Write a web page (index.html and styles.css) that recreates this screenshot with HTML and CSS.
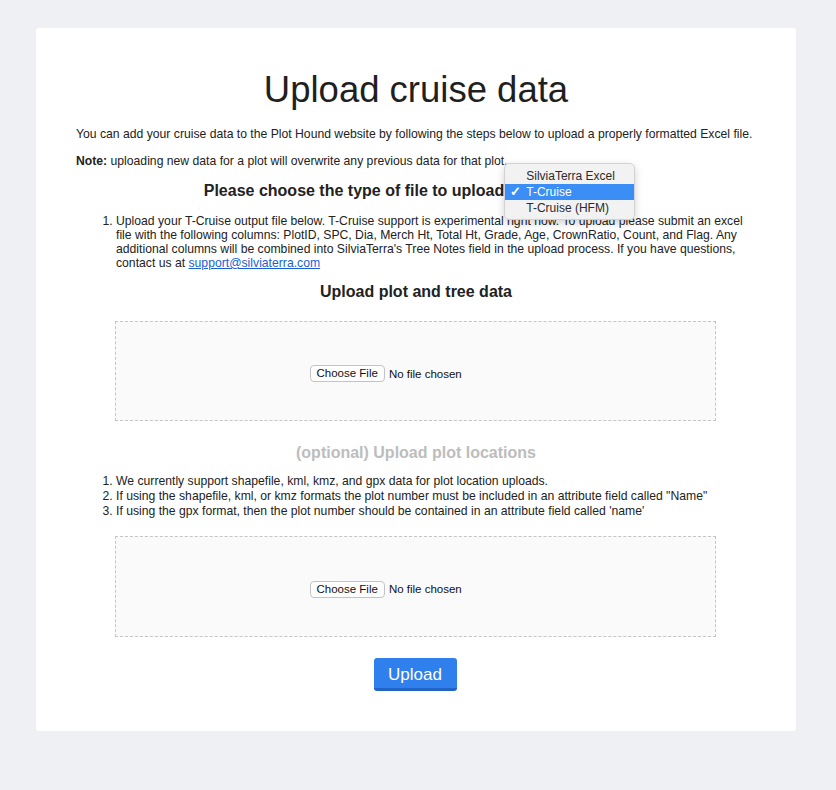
FILE: index.html
```html
<!DOCTYPE html>
<html lang="en">
<head>
<meta charset="utf-8">
<title>Upload cruise data</title>
<link rel="stylesheet" href="styles.css">
</head>
<body>
<main class="card">
  <h1 class="title">Upload cruise data</h1>
  <p class="text">You can add your cruise data to the Plot Hound website by following the steps below to upload a properly formatted Excel file.</p>
  <p class="text"><strong>Note:</strong> uploading new data for a plot will overwrite any previous data for that plot.</p>
  <h3 class="heading choose">Please choose the type of file to upload<span class="select-anchor"><span class="menu">
      <span class="menu-item">SilviaTerra Excel</span>
      <span class="menu-item selected"><span class="check">✓</span>T-Cruise</span>
      <span class="menu-item">T-Cruise (HFM)</span>
    </span></span></h3>
  <ol class="steps">
    <li>Upload your T-Cruise output file below. T-Cruise support is experimental right now. To upload please submit an excel file with the following columns: PlotID, SPC, Dia, Merch Ht, Total Ht, Grade, Age, CrownRatio, Count, and Flag. Any additional columns will be combined into SilviaTerra's Tree Notes field in the upload process. If you have questions, contact us at <a href="#">support@silviaterra.com</a></li>
  </ol>
  <h3 class="heading">Upload plot and tree data</h3>
  <div class="dropzone">
    <span class="file-input"><span class="file-btn">Choose File</span><span class="file-name">No file chosen</span></span>
  </div>
  <h3 class="heading muted">(optional) Upload plot locations</h3>
  <ol class="steps steps-2">
    <li>We currently support shapefile, kml, kmz, and gpx data for plot location uploads.</li>
    <li>If using the shapefile, kml, or kmz formats the plot number must be included in an attribute field called "Name"</li>
    <li>If using the gpx format, then the plot number should be contained in an attribute field called 'name'</li>
  </ol>
  <div class="dropzone dropzone-2">
    <span class="file-input"><span class="file-btn">Choose File</span><span class="file-name">No file chosen</span></span>
  </div>
  <div class="actions">
    <button class="upload-btn" type="button">Upload</button>
  </div>
</main>
</body>
</html>
```

FILE: styles.css
```css
* { box-sizing: border-box; }

html, body {
  margin: 0;
  padding: 0;
}

body {
  background: #eff0f4;
  font-family: "Liberation Sans", Arial, Helvetica, sans-serif;
  color: #222;
  font-size: 12.2px;
  padding-top: 28px;
  min-height: 790px;
}

.card {
  width: 760px;
  margin: 0 0 0 36px;
  background: #fff;
  border-radius: 3px;
  padding: 42px 40px 40px;
}

.title {
  font-size: 36.5px;
  font-weight: 400;
  line-height: 40px;
  text-align: center;
  margin: 0 0 17px;
  color: #1f1f1f;
}

.text {
  margin: 0 0 13px;
  line-height: 14px;
}

.text strong { font-weight: 700; }

.heading {
  font-size: 16px;
  font-weight: 700;
  line-height: 20px;
  text-align: center;
  margin: 0;
  color: #222;
}

.choose {
  margin-top: 0;
  margin-bottom: 13px;
}

.select-anchor {
  position: relative;
  display: inline-block;
  width: 122px;
  height: 16px;
  vertical-align: middle;
  margin-left: 2px;
}

.menu {
  position: absolute;
  left: -2px;
  top: -21px;
  width: 131px;
  padding: 4px 0 3px;
  background: rgba(242, 242, 242, 0.97);
  border: 1px solid #d2d2d2;
  border-radius: 5px;
  box-shadow: 0 3px 8px rgba(0, 0, 0, 0.18);
  display: flex;
  flex-direction: column;
  text-align: left;
  z-index: 5;
}

.menu-item {
  position: relative;
  display: block;
  font-size: 12px;
  font-weight: 400;
  line-height: 16px;
  padding-left: 21px;
  color: #2b2b2b;
}

.menu-item.selected {
  background: #3a8ef5;
  color: #fff;
}

.check {
  position: absolute;
  left: 5px;
  top: 0;
  font-size: 13px;
  font-weight: 700;
}

.steps {
  margin: 0 0 12px;
  padding-left: 40px;
  padding-right: 4px;
  line-height: 14px;
}

.steps a {
  color: #1a5fd6;
  text-decoration: underline;
}

.dropzone {
  margin: 19px 0 22px 39px;
  width: 601px;
  height: 100px;
  border: 1px dashed #c5c5c5;
  background: #fafafb;
  display: flex;
  align-items: center;
  justify-content: center;
  padding-top: 5px;
}

.file-input {
  display: inline-flex;
  align-items: center;
  width: 212px;
}

.file-btn {
  display: inline-block;
  height: 17px;
  line-height: 15px;
  padding: 0 6px;
  background: #fff;
  border: 1px solid #c3c3c3;
  border-radius: 4px;
  font-size: 11.5px;
  color: #111;
  margin-right: 4px;
}

.file-name {
  font-size: 11.5px;
  color: #111;
}

.muted {
  color: #bdbdbd;
  margin-bottom: 11px;
}

.steps-2 {
  margin: 0;
  line-height: 15px;
}

.dropzone-2 {
  margin-top: 17px;
  margin-bottom: 21px;
  height: 101px;
}

.actions {
  display: flex;
  justify-content: center;
}

.upload-btn {
  width: 83px;
  height: 33px;
  border: 0;
  border-bottom: 3px solid #2363c4;
  border-radius: 3px;
  background: #2f80ed;
  color: #fff;
  font-family: "Liberation Sans", Arial, Helvetica, sans-serif;
  font-size: 17px;
  padding: 4px 0 0;
  transform: translateX(-1px);
}
```
